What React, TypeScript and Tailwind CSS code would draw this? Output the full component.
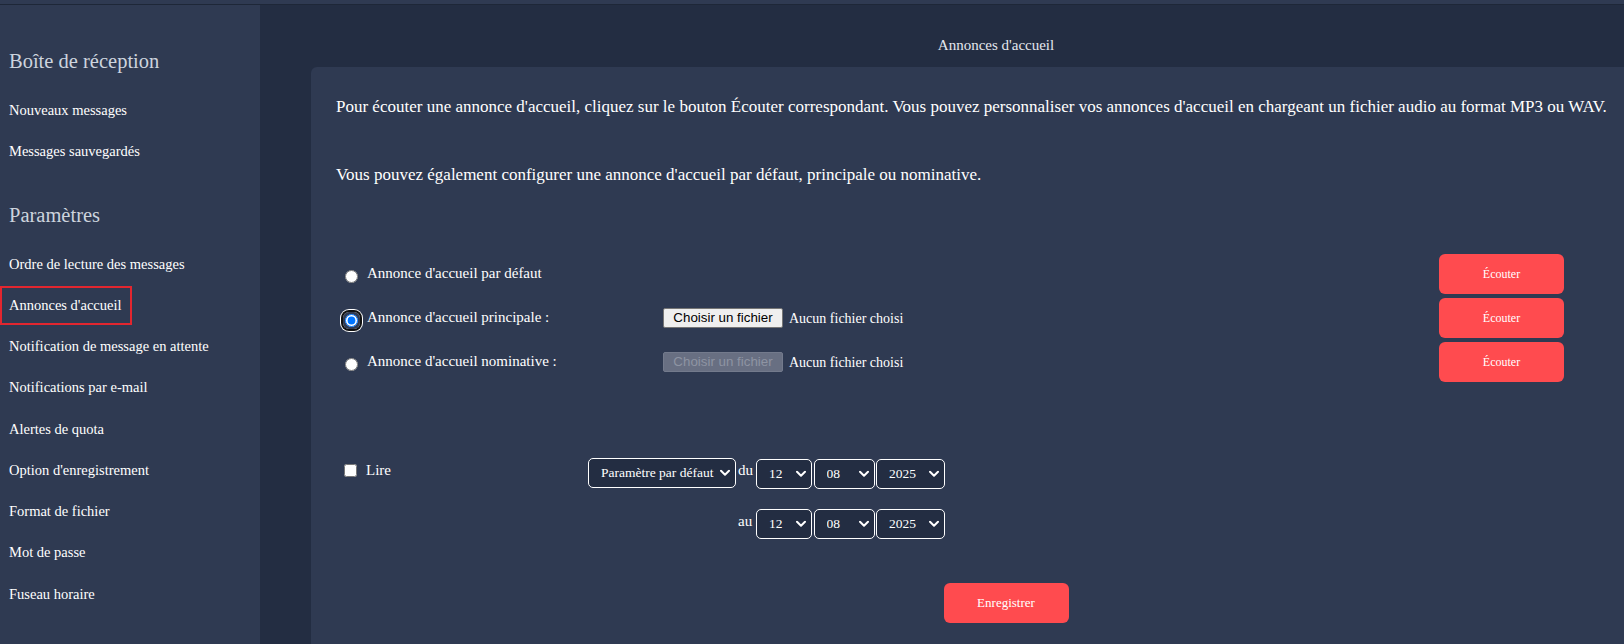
import { useState } from "react";

const inbox = ["Nouveaux messages", "Messages sauvegardés"];

const settings = [
  "Ordre de lecture des messages",
  "Annonces d'accueil",
  "Notification de message en attente",
  "Notifications par e-mail",
  "Alertes de quota",
  "Option d'enregistrement",
  "Format de fichier",
  "Mot de passe",
  "Fuseau horaire",
];

type Greeting = {
  id: string;
  label: string;
  file: "none" | "enabled" | "disabled";
};

const greetings: Greeting[] = [
  { id: "default", label: "Annonce d'accueil par défaut", file: "none" },
  { id: "main", label: "Annonce d'accueil principale :", file: "enabled" },
  { id: "named", label: "Annonce d'accueil nominative :", file: "disabled" },
];

function NavItem({ label, active }: { label: string; active?: boolean }) {
  return (
    <a
      href="#"
      className={
        "flex h-[39px] w-fit items-center border-2 pl-[7px] pr-[8px] text-[14.5px] text-white " +
        (active ? "border-[#e3262f]" : "border-transparent")
      }
    >
      {label}
    </a>
  );
}

function Chevron() {
  return (
    <svg
      className="pointer-events-none absolute right-[6px] top-1/2 -translate-y-1/2"
      width="10"
      height="7"
      viewBox="0 0 10 7"
      fill="none"
    >
      <polyline
        points="1,1.2 5,5.2 9,1.2"
        stroke="white"
        strokeWidth="2"
        strokeLinecap="round"
        strokeLinejoin="round"
      />
    </svg>
  );
}

function Select({
  options,
  className,
}: {
  options: string[];
  className: string;
}) {
  return (
    <div className={"relative h-[30px] " + className}>
      <select className="h-full w-full appearance-none rounded-[5px] border border-white bg-[#232d42] pl-[12px] text-[13.5px] text-white outline-none">
        {options.map((o) => (
          <option key={o}>{o}</option>
        ))}
      </select>
      <Chevron />
    </div>
  );
}

function DateSelects() {
  return (
    <div className="flex gap-[1.5px]">
      <Select options={["12"]} className="w-[56px]" />
      <Select options={["08"]} className="w-[61px]" />
      <Select options={["2025"]} className="w-[69px]" />
    </div>
  );
}

function FileField({ disabled }: { disabled?: boolean }) {
  return (
    <div className="flex items-center gap-[6px]">
      <span
        className={
          "flex h-[20px] w-[120px] items-center justify-center rounded-[2px] border font-['Liberation_Sans',Arial,sans-serif] text-[13.33px] " +
          (disabled
            ? "border-[#737a8c] bg-[#686f82] text-[#8e94a3]"
            : "border-[#767676] bg-[#efefef] text-black")
        }
      >
        Choisir un fichier
      </span>
      <span className="text-[14px] text-white">Aucun fichier choisi</span>
    </div>
  );
}

export default function App() {
  const [selected, setSelected] = useState("main");
  const [read, setRead] = useState(false);

  return (
    <div className="flex h-[644px] w-full flex-col overflow-hidden bg-[#232d42] font-['Liberation_Serif','Times_New_Roman',serif]">
      <div className="box-content h-[4px] shrink-0 border-b border-[#1e2738] bg-[#2f3a52]" />

      <div className="flex min-h-0 flex-1">
        <aside className="w-[260px] shrink-0 bg-[#2f3a52]">
          <h2 className="ml-[9px] mt-[41px] h-[30px] text-[20.5px] leading-[30px] text-[#cdd4de]">
            Boîte de réception
          </h2>
          <nav className="mt-[15.5px] flex flex-col gap-[2px]">
            {inbox.map((item) => (
              <NavItem key={item} label={item} />
            ))}
          </nav>
          <h2 className="ml-[9px] mt-[28px] h-[30px] text-[20.5px] leading-[30px] text-[#cdd4de]">
            Paramètres
          </h2>
          <nav className="mt-[15.5px] flex flex-col gap-[2.25px]">
            {settings.map((item) => (
              <NavItem
                key={item}
                label={item}
                active={item === "Annonces d'accueil"}
              />
            ))}
          </nav>
        </aside>

        <main className="min-w-0 flex-1 overflow-hidden">
          <div className="ml-[51px] flex h-full w-[1370px] flex-col">
            <h1 className="h-[62px] shrink-0 pt-[30px] text-center text-[15px] leading-[20px] text-[#e3e7ee]">
              Annonces d'accueil
            </h1>

            <section className="flex-1 rounded-t-[6px] bg-[#2f3a52] px-[25px] text-white">
              <p className="pt-[28px] text-[17px] leading-[24px]">
                Pour écouter une annonce d'accueil, cliquez sur le bouton Écouter
                correspondant. Vous pouvez personnaliser vos annonces d'accueil en
                chargeant un fichier audio au format MP3 ou WAV.
              </p>
              <p className="mt-[44px] text-[17px] leading-[24px]">
                Vous pouvez également configurer une annonce d'accueil par défaut,
                principale ou nominative.
              </p>

              <div className="ml-[7px] w-[1221px]">
                <div className="mt-[67px] flex flex-col gap-[4px]">
                  {greetings.map((g) => (
                    <div key={g.id} className="flex h-[40px] items-center">
                      <label className="flex w-[320px] items-center gap-[7px]">
                        <span
                          className={
                            "flex translate-y-[2px] rounded-[6px] p-[2px] " +
                            (selected === g.id
                              ? "shadow-[0_0_0_2px_#111111,0_0_0_3px_#ffffff]"
                              : "")
                          }
                        >
                          <input
                            type="radio"
                            name="greeting"
                            className="m-0 h-[13px] w-[13px]"
                            checked={selected === g.id}
                            onChange={() => setSelected(g.id)}
                          />
                        </span>
                        <span className="-translate-y-px text-[15px]">{g.label}</span>
                      </label>
                      {g.file !== "none" && (
                        <FileField disabled={g.file === "disabled"} />
                      )}
                      <button
                        type="button"
                        className="ml-auto h-[40px] w-[125px] rounded-[6px] bg-[#ff4b4f] text-[12px] text-white"
                      >
                        Écouter
                      </button>
                    </div>
                  ))}
                </div>

                <div className="mt-[76px] flex items-start">
                  <label className="flex h-[30px] w-[245px] -translate-y-[3px] items-center gap-[9px]">
                    <input
                      type="checkbox"
                      className="m-0 ml-px h-[13px] w-[13px]"
                      checked={read}
                      onChange={(e) => setRead(e.target.checked)}
                    />
                    <span className="text-[15px]">Lire</span>
                  </label>
                  <div className="flex flex-col gap-[20px]">
                    <div className="flex items-start">
                      <Select
                        options={["Paramètre par défaut"]}
                        className="w-[148px]"
                      />
                      <span className="mx-[2px] w-[16px] text-[15px] leading-[24px]">
                        du
                      </span>
                      <div className="mt-px">
                        <DateSelects />
                      </div>
                    </div>
                    <div className="flex items-start">
                      <span className="ml-[150px] mr-[2px] w-[16px] text-[15px] leading-[24px]">
                        au
                      </span>
                      <DateSelects />
                    </div>
                  </div>
                </div>
              </div>

              <div className="mt-[44px] flex justify-center">
                <button
                  type="button"
                  className="ml-[20px] h-[40px] w-[125px] rounded-[6px] bg-[#ff4b4f] text-[13px] text-white"
                >
                  Enregistrer
                </button>
              </div>
            </section>
          </div>
        </main>
      </div>
    </div>
  );
}
